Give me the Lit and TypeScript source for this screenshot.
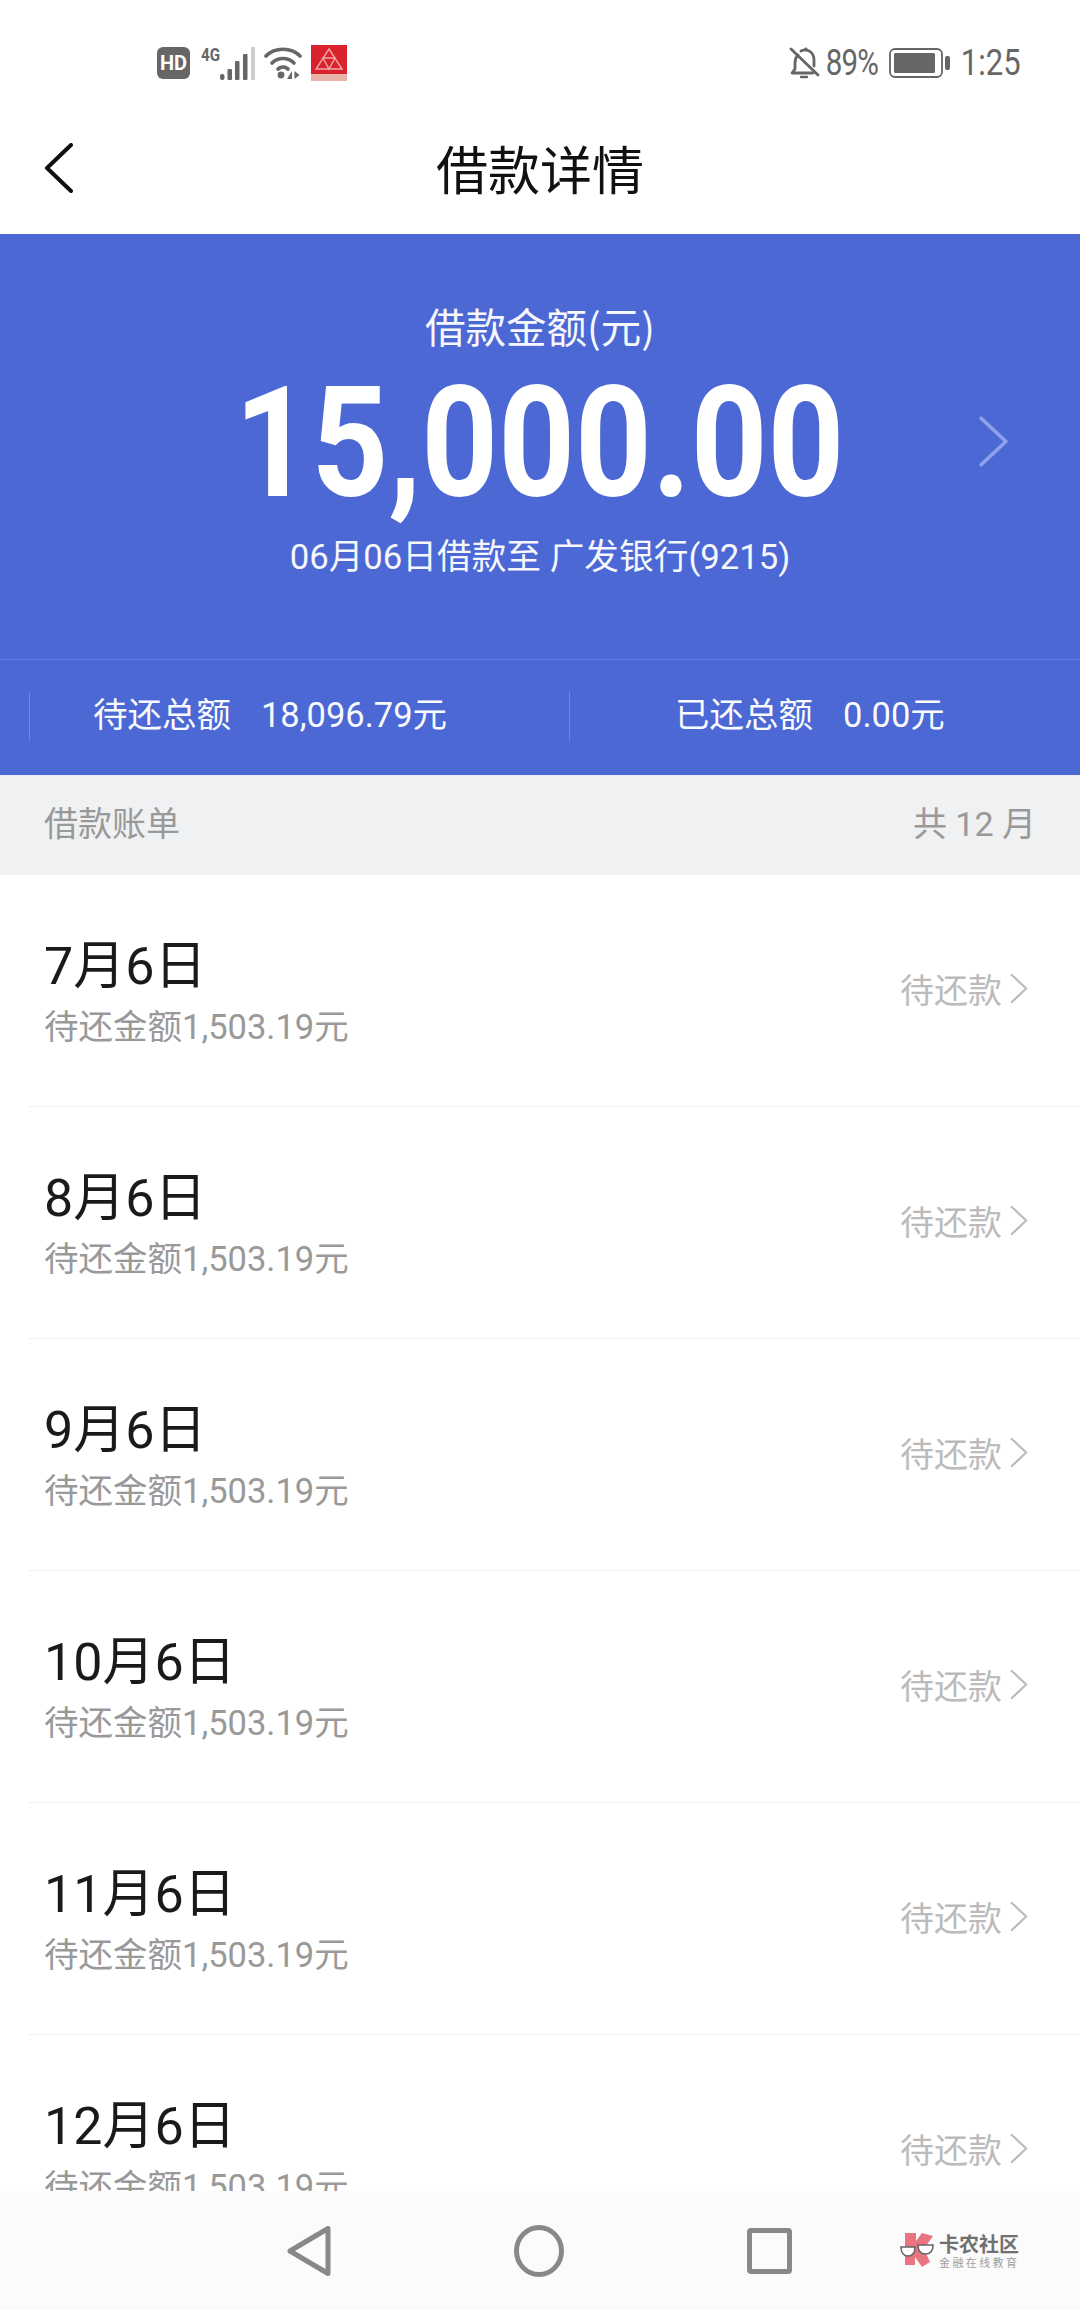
import { LitElement, css, html } from "lit";
import { customElement } from "lit/decorators.js";

const bills = ["7月6日", "8月6日", "9月6日", "10月6日", "11月6日", "12月6日"];

const chevron = (cls: string) => html`
  <svg class=${cls} viewBox="0 0 20 34" fill="none" stroke="currentColor" stroke-width="2.4" stroke-linecap="round" stroke-linejoin="round">
    <path d="M2 2l16 15L2 32" />
  </svg>
`;

@customElement("app-root")
export class AppRoot extends LitElement {
  static styles = css`
    :host {
      display: flex;
      flex-direction: column;
      width: 1080px;
      height: 2310px;
      overflow: hidden;
      background: #fff;
      font-family: Roboto, "Noto Sans CJK SC", sans-serif;
    }

    .status {
      display: flex;
      align-items: center;
      height: 103px;
      padding: 22px 60px 0 157px;
      box-sizing: border-box;
      color: #666;
      flex: none;
    }
    .status svg {
      display: block;
      flex: none;
    }
    .status .hd { width: 33px; height: 32px; margin-right: 11px; }
    .status .signal { width: 54px; height: 36px; margin-right: 9px; }
    .status .wifi { width: 39px; height: 33px; margin-right: 8px; }
    .status .bank { width: 36px; height: 36px; }
    .status .bell { width: 31px; height: 32px; margin-left: auto; margin-right: 5px; }
    .status .pct {
      font-size: 36px;
      letter-spacing: -1px;
      transform: scaleX(0.82);
      margin: 0 5px 0 -5px;
    }
    .status .batt { width: 61px; height: 30px; margin-right: 6px; }
    .status .time {
      font-size: 36px;
      transform: scaleX(0.86);
      margin-right: -5px;
    }

    .nav {
      display: grid;
      grid-template-columns: 1fr auto 1fr;
      align-items: center;
      height: 131px;
      padding: 0 0 2px 44px;
      box-sizing: border-box;
      flex: none;
    }
    .nav .back {
      display: block;
      width: 29px;
      height: 50px;
      color: #111;
    }
    .nav .title {
      font-family: "Noto Sans CJK SC", sans-serif;
      font-size: 52px;
      color: #111;
      margin-left: -44px;
    }

    .hero {
      background: #4b68d5;
      color: #fff;
      flex: none;
    }
    .hero-top {
      display: grid;
      grid-template-columns: 1fr auto 1fr;
      grid-template-rows: 63px 162px 50px;
      justify-items: center;
      align-items: center;
      height: 426px;
      padding-top: 60px;
      box-sizing: border-box;
      border-bottom: 1px solid #6880e6;
    }
    .hero-label {
      grid-column: 2;
      font-size: 40.5px;
      line-height: 60px;
      font-family: "Noto Sans CJK SC", sans-serif;
      opacity: 0.95;
    }
    .amount {
      grid-column: 2;
      font-size: 154px;
      line-height: 162px;
      font-weight: 700;
      margin-top: 12px;
      transform: scaleX(0.87);
    }
    .hero-arrow {
      grid-column: 3;
      grid-row: 2;
      justify-self: end;
      margin: 6px 71px 0 0;
      width: 31px;
      height: 53px;
      color: #8fa1ea;
    }
    .hero-sub {
      grid-column: 2;
      font-size: 34.7px;
      line-height: 50px;
      margin-top: 26px;
      opacity: 0.95;
    }
    .stats {
      display: grid;
      grid-template-columns: 1fr 1fr;
      height: 115px;
    }
    .stat {
      position: relative;
      display: flex;
      align-items: center;
      justify-content: center;
      gap: 30px;
      padding-bottom: 12px;
      font-size: 34.5px;
      opacity: 0.97;
    }
    .stat::before {
      content: "";
      position: absolute;
      left: 29px;
      top: 32px;
      height: 49px;
      width: 1px;
      background: #6f87e6;
    }

    .strip {
      display: flex;
      justify-content: space-between;
      align-items: center;
      height: 100px;
      padding: 0 44px 8px 44px;
      box-sizing: border-box;
      background: #f0f1f3;
      color: #999;
      font-size: 34px;
      flex: none;
    }

    .list {
      flex: 1;
      min-height: 0;
      overflow: hidden;
    }
    .row {
      display: flex;
      justify-content: space-between;
      align-items: center;
      height: 232px;
      box-sizing: border-box;
      margin-left: 29px;
      padding: 0 52px 0 15px;
      border-bottom: 1px solid #f0f0f0;
    }
    .row:last-child { border-bottom: none; }
    .date {
      font-size: 52px;
      line-height: 70px;
      color: #1a1a1a;
    }
    .due {
      font-size: 34.5px;
      line-height: 46px;
      color: #999;
      margin-top: 2px;
    }
    .state {
      display: flex;
      align-items: center;
      gap: 8px;
      padding-bottom: 5px;
      font-size: 34px;
      color: #bbb;
    }
    .state svg {
      display: block;
      width: 18px;
      height: 31px;
    }

    .softkeys {
      display: flex;
      align-items: center;
      height: 119px;
      padding-left: 287px;
      background: #fbfbfb;
      flex: none;
    }
    .softkeys svg { display: block; flex: none; }
    .softkeys .k-back { width: 44px; height: 52px; }
    .softkeys .k-home { width: 50px; height: 52px; margin-left: 183px; }
    .softkeys .k-recent { width: 45px; height: 46px; margin-left: 183px; }
    .logo {
      display: flex;
      align-items: center;
      margin-left: 108px;
    }
    .logo svg { width: 36px; height: 38px; }
    .logo-text {
      margin-left: 3px;
      font-family: "Noto Sans CJK SC", sans-serif;
      color: #707070;
    }
    .logo-name {
      font-size: 20px;
      line-height: 22px;
      font-weight: 700;
    }
    .logo-tag {
      font-size: 11px;
      line-height: 14px;
      letter-spacing: 2.4px;
      color: #a0a0a0;
    }
  `;

  protected override render() {
    return html`
      <div class="status">
        <svg class="hd" viewBox="0 0 33 32">
          <rect width="33" height="32" rx="6" fill="#666" />
          <text x="16.500" y="23" text-anchor="middle" font-size="20" font-weight="700" fill="#fff" font-family="Roboto, sans-serif">HD</text>
        </svg>
        <svg class="signal" viewBox="0 0 54 36">
          <text x="0" y="16" font-size="18" font-weight="700" fill="#666" font-family="Roboto, sans-serif" textLength="19" lengthAdjust="spacingAndGlyphs">4G</text>
          <g fill="#666">
            <rect x="19" y="29" width="4.500" height="6" rx="2" />
            <rect x="26.500" y="24" width="4.500" height="11" rx="1" />
            <rect x="34" y="16" width="4.500" height="19" rx="1" />
            <rect x="42" y="9" width="4.500" height="26" rx="1" />
          </g>
          <rect x="50" y="2" width="4" height="33" rx="1" fill="#ccc" />
        </svg>
        <svg class="wifi" viewBox="0 0 39 33" fill="none" stroke="#666" stroke-width="3.6" stroke-linecap="round">
          <path d="M2 10C11 1 27 1 36 10" />
          <path d="M8 17c6-6 16-6 22 0" />
          <path d="M14 23c3-2.500 7-2.500 10 0" />
          <circle cx="17" cy="29" r="3.400" fill="#666" stroke="none" />
          <path d="M28 25v8h-5zM30.500 25l5 4-5 4z" fill="#666" stroke="none" />
        </svg>
        <svg class="bank" viewBox="0 0 36 36">
          <rect width="36" height="36" fill="#d8232c" />
          <rect y="29" width="36" height="7" fill="#eab3a8" />
          <path d="M18 4L31 24H5zM12 13h12L18 24z" fill="none" stroke="#f4a6a6" stroke-width="1.400" />
        </svg>

        <svg class="bell" viewBox="0 0 31 32" fill="none" stroke="#666" stroke-width="2.800" stroke-linecap="round" stroke-linejoin="round">
          <path d="M2 2l27 26" />
          <path d="M9 8c-2 2-3 5-3 8v6l-3 4h21" />
          <path d="M12 4c6-3 13 1 13 9v6" />
          <path d="M17 3v-1" />
          <path d="M12 30h6" stroke-width="2.400" />
        </svg>
        <span class="pct">89%</span>
        <svg class="batt" viewBox="0 0 61 30">
          <rect x="1" y="1" width="52" height="28" rx="5" fill="none" stroke="#666" stroke-width="1.800" />
          <rect x="5" y="5" width="41" height="20" rx="1.500" fill="#666" />
          <rect x="56" y="8" width="5" height="14" rx="2" fill="#666" />
        </svg>
        <span class="time">1:25</span>
      </div>

      <div class="nav">
        ${chevronBack()}
        <div class="title">借款详情</div>
      </div>

      <div class="hero">
        <div class="hero-top">
          <div class="hero-label">借款金额(元)</div>
          <div class="amount">15,000.00</div>
          ${chevron("hero-arrow")}
          <div class="hero-sub">06月06日借款至 广发银行(9215)</div>
        </div>
        <div class="stats">
          <div class="stat"><span>待还总额</span><span>18,096.79元</span></div>
          <div class="stat"><span>已还总额</span><span>0.00元</span></div>
        </div>
      </div>

      <div class="strip">
        <span>借款账单</span>
        <span>共 12 月</span>
      </div>

      <div class="list">
        ${bills.map(
          (d) => html`
            <div class="row">
              <div>
                <div class="date">${d}</div>
                <div class="due">待还金额1,503.19元</div>
              </div>
              <div class="state">待还款 ${chevron("")}</div>
            </div>
          `,
        )}
      </div>

      <div class="softkeys">
        <svg class="k-back" viewBox="0 0 44 52" fill="none" stroke="#888" stroke-width="5" stroke-linejoin="round">
          <path d="M41 3.500V48.500L3 26z" />
        </svg>
        <svg class="k-home" viewBox="0 0 50 52" fill="none" stroke="#888" stroke-width="5">
          <ellipse cx="25" cy="26" rx="22.500" ry="23.500" />
        </svg>
        <svg class="k-recent" viewBox="0 0 45 46" fill="none" stroke="#888" stroke-width="5" stroke-linejoin="round">
          <rect x="2.500" y="2.500" width="40" height="41" rx="1.500" />
        </svg>
        <div class="logo">
          <svg viewBox="0 0 36 38">
            <path d="M5 1h11v8l6-8 11 3-9 13 6 13-8 5-7-10v8H5z" fill="#ea7480" />
            <path d="M1 15h14c0 6-3 9-7 9s-7-3-7-9z" fill="#fff" stroke="#666" stroke-width="1.600" />
            <path d="M18 13h15c0 6-3 9-7.500 9S18 19 18 13z" fill="#fff" stroke="#666" stroke-width="1.600" />
          </svg>
          <div class="logo-text">
            <div class="logo-name">卡农社区</div>
            <div class="logo-tag">金融在线教育</div>
          </div>
        </div>
      </div>
    `;
  }
}

function chevronBack() {
  return html`
    <svg class="back" viewBox="0 0 29 50" fill="none" stroke="currentColor" stroke-width="4" stroke-linecap="round" stroke-linejoin="round">
      <path d="M27 2L3 25l24 23" />
    </svg>
  `;
}
